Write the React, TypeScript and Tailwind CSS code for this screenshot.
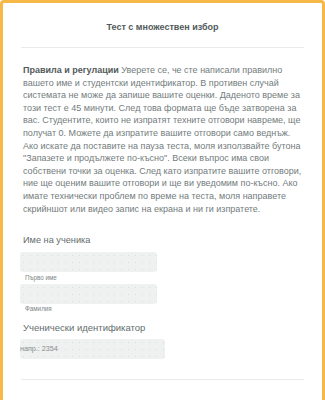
import React from "react";

const dots =
  "bg-[#eff1f0] bg-[radial-gradient(#dadddc_0.6px,transparent_0.8px)] bg-[length:7px_7px]";

export default function App() {
  return (
    <div
      className="w-[325px] h-[400px] overflow-hidden border-[3px] border-b-0 border-[#f6b846] rounded-t-[4px] bg-white"
      style={{ fontFamily: '"Liberation Sans", Arial, sans-serif' }}
    >
      <div className="px-[18px]">
        <h1 className="pt-[18px] pb-[14px] text-center text-[9px] leading-[12px] font-bold text-[#525a5b]">
          Тест с множествен избор
        </h1>
        <div className="h-px bg-[#e9ebeb]" />
        <p className="mt-[16px] pl-[2px] text-[9px] leading-[12.6px] text-[#737c7d]">
          <span className="font-bold text-[#525a5b]">Правила и регулации </span>
          Уверете се, че сте написали правилно вашето име и студентски
          идентификатор. В противен случай системата не може да запише вашите
          оценки. Даденото време за този тест е 45 минути. След това формата ще
          бъде затворена за вас. Студентите, които не изпратят техните отговори
          навреме, ще получат 0. Можете да изпратите вашите отговори само
          веднъж. Ако искате да поставите на пауза теста, моля използвайте
          бутона "Запазете и продължете по-късно". Всеки въпрос има свои
          собствени точки за оценка. След като изпратите вашите отговори, ние ще
          оценим вашите отговори и ще ви уведомим по-късно. Ако имате технически
          проблем по време на теста, моля направете скрийншот или видео запис на
          екрана и ни ги изпратете.
        </p>
        <div className="mt-[19px] pl-[2px] text-[9.2px] leading-[12px] text-[#646d6e]">
          Име на ученика
        </div>
        <div className={`mt-[6px] -ml-px w-[137px] h-[20px] rounded-[3px] ${dots}`} />
        <div className="mt-[2px] pl-[4px] text-[6.3px] leading-[8px] text-[#7c8485]">
          Първо име
        </div>
        <div className={`mt-[2px] -ml-px w-[137px] h-[20px] rounded-[3px] ${dots}`} />
        <div className="mt-px pl-[4px] text-[6.3px] leading-[8px] text-[#7c8485]">
          Фамилия
        </div>
        <div className="mt-[8.5px] pl-[2px] text-[9.5px] leading-[12px] text-[#646d6e]">
          Ученически идентификатор
        </div>
        <div
          className={`mt-[5.5px] -ml-px w-[145px] h-[20px] rounded-[3px] flex items-center text-[7.2px] text-[#858c8d] ${dots}`}
        >
          напр.: 2354
        </div>
        <div className="mt-[20px] h-px bg-[#e9ebeb]" />
      </div>
    </div>
  );
}
